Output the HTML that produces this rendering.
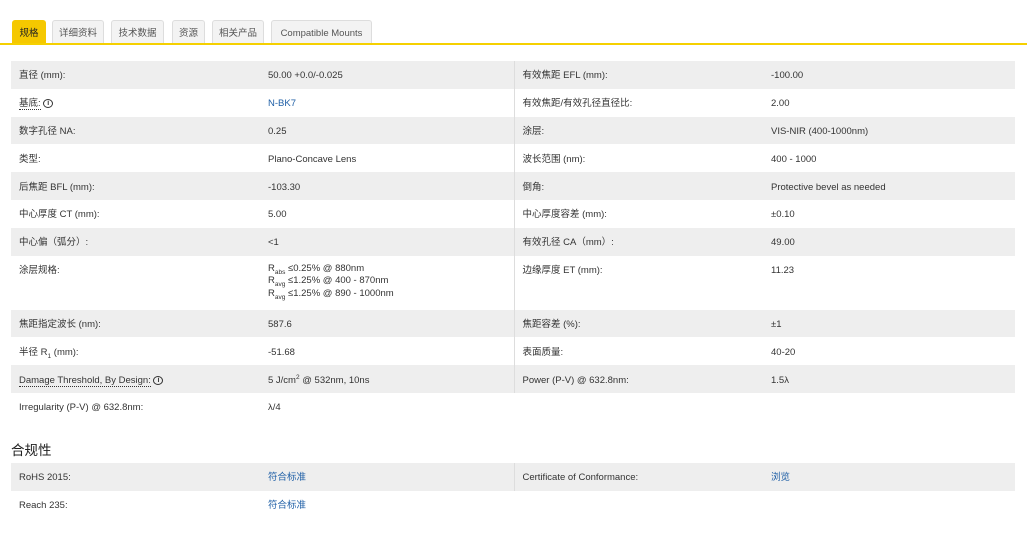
<!DOCTYPE html>
<html><head><meta charset="utf-8"><style>
*{margin:0;padding:0;box-sizing:border-box}
body{width:1027px;height:536px;overflow:hidden;background:#fff;font-family:"Liberation Sans","Noto Sans CJK SC",sans-serif;font-size:9.5px;color:#333;position:relative}
.tab{position:absolute;top:20px;height:24px;border:1px solid #ddd;border-bottom:none;background:#f3f3f3;border-radius:3px 3px 0 0;font-size:9.5px;color:#555;text-align:center;line-height:25px}
.tab.on{background:#f5c800;border-color:#f5c800;color:#222}
.line{position:absolute;top:43px;left:0;width:1027px;height:2px;background:#f5d000}
table{position:absolute;left:11px;width:1004px;border-collapse:collapse}
td{height:27.8px;vertical-align:middle;padding-left:8px;padding-top:3px;line-height:12px}
td span,td a{line-height:12px}
tr.g td{background:#eee}
td.c1{width:249px}td.c2{width:254px;border-right:1px solid #ddd}td.c3{width:249px}
a{color:#1f5fa6;text-decoration:none}
.u{border-bottom:1px dotted #333}
.i{display:inline-block;width:10px;height:9px;border:1.3px solid #333;border-radius:50%;font-size:7px;line-height:7px!important;text-align:center;font-weight:bold;vertical-align:middle}
sub,sup{font-size:6.5px;line-height:0}
h3{position:absolute;left:11px;top:442px;font-size:13.5px;font-weight:normal;color:#222;line-height:18px}
</style></head><body>
<div class="tab on" style="left:12px;width:34px">规格</div>
<div class="tab" style="left:52px;width:52px">详细资料</div>
<div class="tab" style="left:111px;width:53px">技术数据</div>
<div class="tab" style="left:172px;width:33px">资源</div>
<div class="tab" style="left:212px;width:52px">相关产品</div>
<div class="tab" style="left:271px;width:101px">Compatible Mounts</div>
<div class="line"></div>
<table style="top:61px">
<tr class="g"><td class="c1">直径 (mm):</td><td class="c2">50.00 +0.0/-0.025</td><td class="c3">有效焦距 EFL (mm):</td><td>-100.00</td></tr>
<tr><td class="c1"><span class="u">基底:</span> <span class="i">i</span></td><td class="c2"><a>N-BK7</a></td><td class="c3">有效焦距/有效孔径直径比:</td><td>2.00</td></tr>
<tr class="g"><td class="c1">数字孔径 NA:</td><td class="c2">0.25</td><td class="c3">涂层:</td><td>VIS-NIR (400-1000nm)</td></tr>
<tr><td class="c1">类型:</td><td class="c2">Plano-Concave Lens</td><td class="c3">波长范围 (nm):</td><td>400 - 1000</td></tr>
<tr class="g"><td class="c1">后焦距 BFL (mm):</td><td class="c2">-103.30</td><td class="c3">倒角:</td><td>Protective bevel as needed</td></tr>
<tr><td class="c1">中心厚度 CT (mm):</td><td class="c2">5.00</td><td class="c3">中心厚度容差 (mm):</td><td>±0.10</td></tr>
<tr class="g"><td class="c1">中心偏（弧分）:</td><td class="c2">&lt;1</td><td class="c3">有效孔径 CA（mm）:</td><td>49.00</td></tr>
<tr><td class="c1" style="height:54px;vertical-align:top;padding-top:9px">涂层规格:</td><td class="c2" style="vertical-align:top;padding-top:7px;line-height:12.5px">R<sub>abs</sub> ≤0.25% @ 880nm<br>R<sub>avg</sub> ≤1.25% @ 400 - 870nm<br>R<sub>avg</sub> ≤1.25% @ 890 - 1000nm</td><td class="c3" style="vertical-align:top;padding-top:9px">边缘厚度 ET (mm):</td><td style="vertical-align:top;padding-top:9px">11.23</td></tr>
<tr class="g"><td class="c1">焦距指定波长 (nm):</td><td class="c2">587.6</td><td class="c3">焦距容差 (%):</td><td>±1</td></tr>
<tr><td class="c1">半径 R<sub>1</sub> (mm):</td><td class="c2">-51.68</td><td class="c3">表面质量:</td><td>40-20</td></tr>
<tr class="g"><td class="c1"><span class="u">Damage Threshold, By Design:</span> <span class="i">i</span></td><td class="c2">5 J/cm<sup>2</sup> @ 532nm, 10ns</td><td class="c3">Power (P-V) @ 632.8nm:</td><td>1.5λ</td></tr>
<tr><td class="c1">Irregularity (P-V) @ 632.8nm:</td><td class="c2" style="border-right:none">λ/4</td><td class="c3"></td><td></td></tr>
</table>
<h3>合规性</h3>
<table style="top:463px">
<tr class="g"><td class="c1">RoHS 2015:</td><td class="c2"><a>符合标准</a></td><td class="c3">Certificate of Conformance:</td><td><a>浏览</a></td></tr>
<tr><td class="c1">Reach 235:</td><td class="c2" style="border-right:none"><a>符合标准</a></td><td class="c3"></td><td></td></tr>
</table>
</body></html>
